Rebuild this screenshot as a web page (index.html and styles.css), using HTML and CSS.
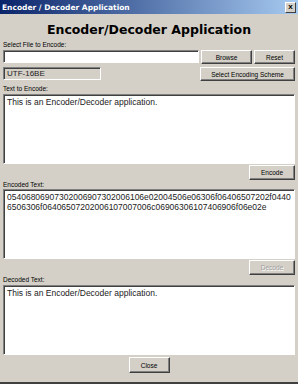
FILE: index.html
```html
<!DOCTYPE html>
<html lang="en">
<head>
    <meta charset="UTF-8">
    <title>Encoder / Decoder Application</title>
    <link rel="stylesheet" href="styles.css">
</head>
<body>
    <div class="window">
        <div class="titlebar">
            <span class="title">Encoder / Decoder Application</span>
            <span class="close-x">x</span>
        </div>
        <h1>Encoder/Decoder Application</h1>
        <div class="label">Select File to Encode:</div>
        <div class="row">
            <div class="field file"></div>
            <button class="btn browse">Browse</button>
            <button class="btn reset">Reset</button>
        </div>
        <div class="row">
            <div class="field scheme">UTF-16BE</div>
            <button class="btn select">Select Encoding Scheme</button>
        </div>
        <div class="label">Text to Encode:</div>
        <div class="area">This is an Encoder/Decoder application.</div>
        <div class="actions">
            <button class="btn act">Encode</button>
        </div>
        <div class="label short">Encoded Text:</div>
        <div class="area hex">05406806907302006907302006106e02004506e06306f06406507202f04406506306f06406507202006107007006c06906306107406906f06e02e</div>
        <div class="actions">
            <button class="btn act" disabled>Decode</button>
        </div>
        <div class="label">Decoded Text:</div>
        <div class="area">This is an Encoder/Decoder application.</div>
        <div class="actions center">
            <button class="btn closebtn">Close</button>
        </div>
    </div>
</body>
</html>
```

FILE: styles.css
```css
body {
    margin: 0;
    padding: 0;
    background-color: #d4d0c8;
    font-family: "Liberation Sans", Arial, sans-serif;
}

.window {
    width: 298px;
    height: 384px;
    box-sizing: border-box;
    background-color: #d4d0c8;
    border-bottom: 2px solid #404040;
    padding: 0 3px;
}

.titlebar {
    height: 14px;
    margin: 0 -3px;
    padding: 0 2px;
    display: flex;
    align-items: center;
    justify-content: space-between;
    background: linear-gradient(to right, #0a246a, #a6caf0);
}

.title {
    color: #fff;
    font-family: "DejaVu Sans", sans-serif;
    font-weight: bold;
    font-size: 7.5px;
}

.close-x {
    width: 9px;
    height: 9px;
    line-height: 8px;
    text-align: center;
    font-size: 8px;
    font-weight: bold;
    background-color: #d4d0c8;
    border: 1px solid;
    border-color: #fff #404040 #404040 #fff;
    color: #000;
}

h1 {
    margin: 0;
    height: 20px;
    padding-top: 6px;
    line-height: 20px;
    text-align: center;
    font-family: "DejaVu Sans", sans-serif;
    font-size: 12.5px;
    font-weight: bold;
    color: #000;
}

.label {
    height: 10px;
    line-height: 9px;
    font-size: 6.5px;
    color: #000;
}

.short {
    height: 9px;
}

.row {
    display: flex;
    gap: 2px;
    margin-bottom: 3px;
}

.field {
    box-sizing: border-box;
    height: 13px;
    border: 1px solid;
    border-color: #808080 #fff #fff #808080;
    box-shadow: inset 1px 1px 0 #404040;
    font-size: 8px;
    line-height: 11px;
    padding-left: 3px;
    color: #222;
}

.file {
    flex: 1;
    background-color: #fff;
}

.scheme {
    width: 98px;
    height: 13px;
    background-color: #d4d0c8;
    margin-right: auto;
}

.btn {
    box-sizing: border-box;
    height: 14px;
    padding: 0;
    font-family: "Liberation Sans", Arial, sans-serif;
    font-size: 6.5px;
    color: #000;
    background-color: #d4d0c8;
    border: 1px solid;
    border-color: #fff #404040 #404040 #fff;
    box-shadow: inset -1px -1px 0 #808080;
}

.browse {
    width: 51px;
}

.reset {
    width: 41px;
}

.select {
    width: 95px;
    height: 14px;
}

.area {
    box-sizing: border-box;
    height: 70px;
    background-color: #fff;
    border: 1px solid;
    border-color: #808080 #fff #fff #808080;
    box-shadow: inset 1px 1px 0 #404040;
    padding: 2px 3px;
    font-size: 8.5px;
    line-height: 10px;
    color: #222;
}

.hex {
    word-break: break-all;
}

.actions {
    display: flex;
    justify-content: flex-end;
    padding-top: 1px;
}

.act {
    width: 46px;
    height: 15px;
}

.btn:disabled {
    color: #a0a0a0;
    text-shadow: 1px 1px 0 #fff;
}

.center {
    justify-content: center;
    padding-top: 2px;
}

.closebtn {
    width: 41px;
    height: 16px;
}
```
